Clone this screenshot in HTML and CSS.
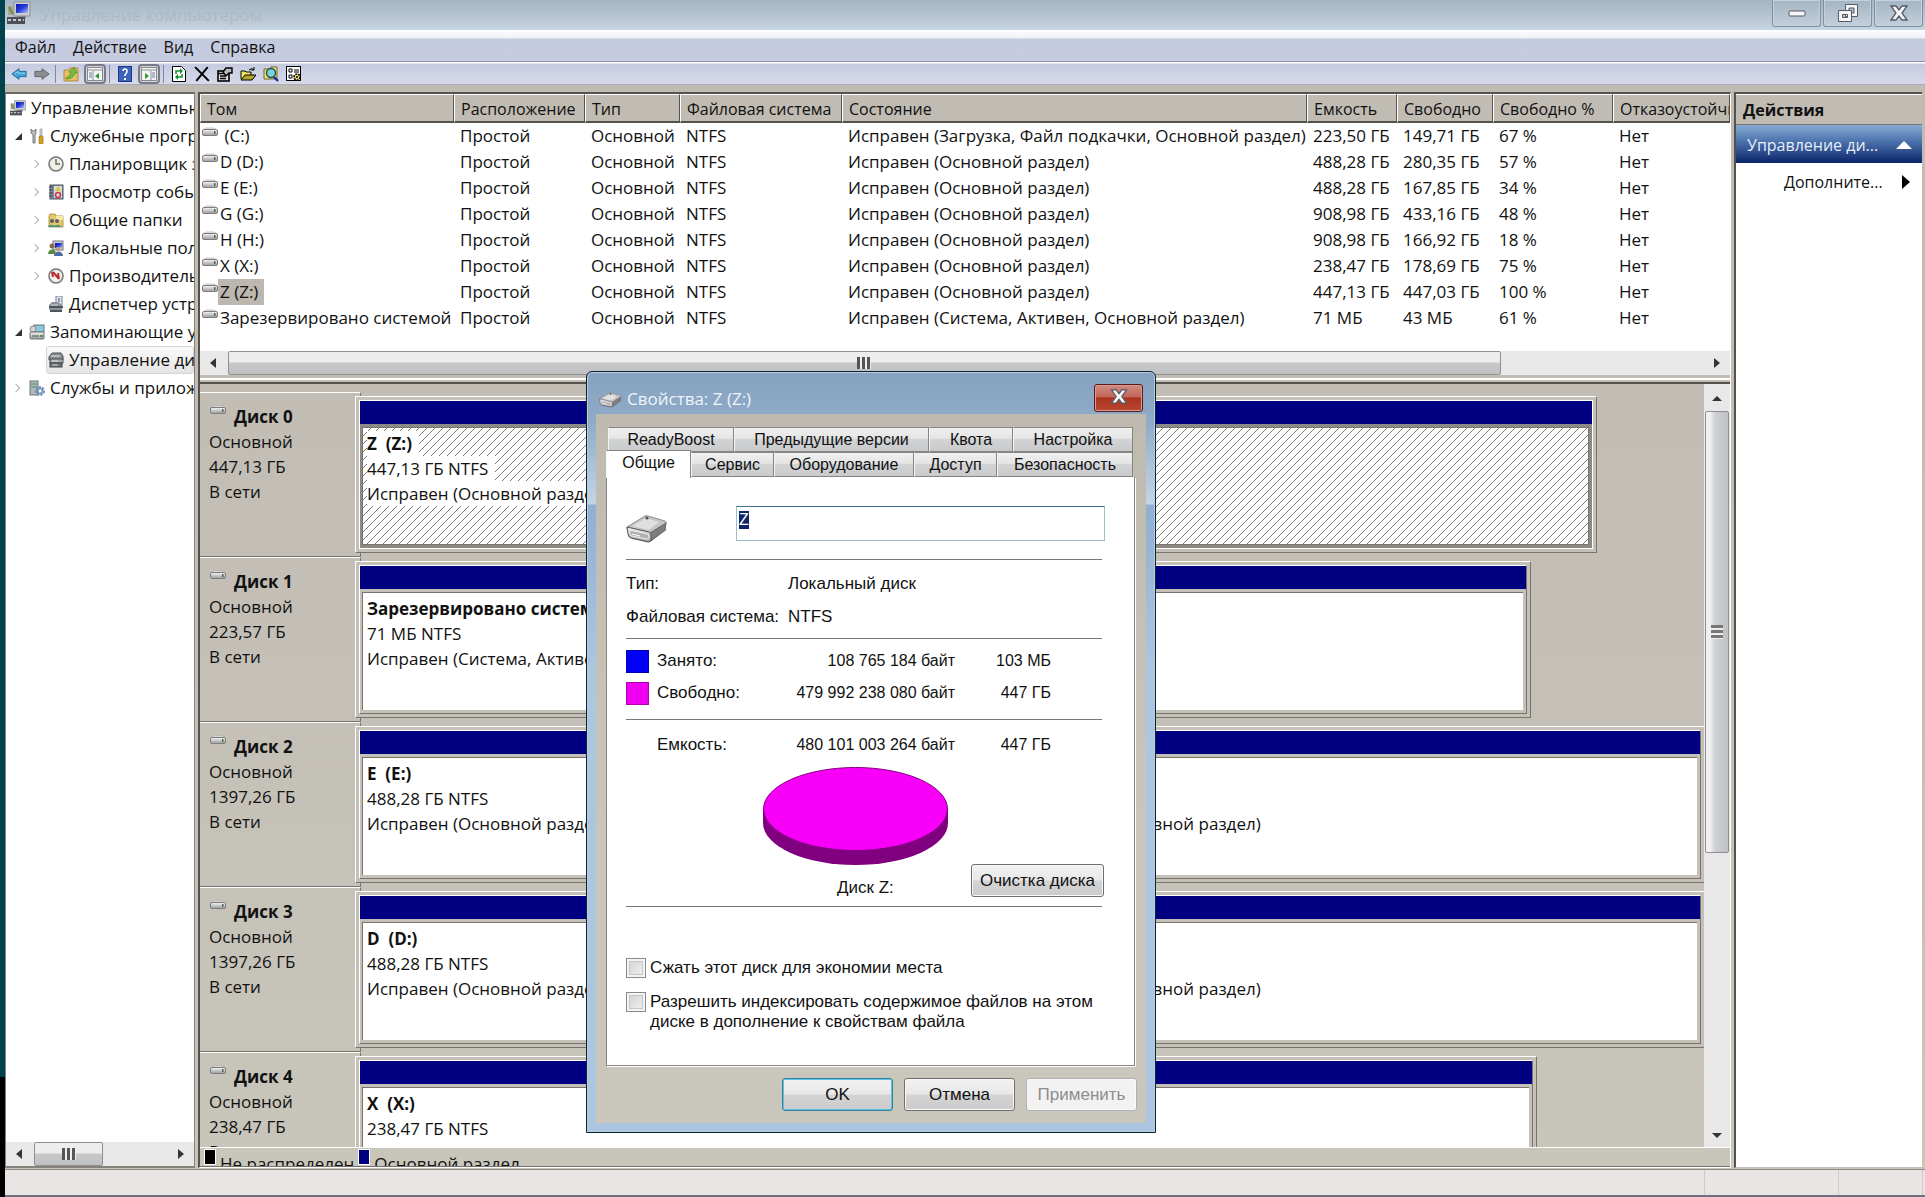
FILE: index.html
```
<!DOCTYPE html>
<html lang="ru">
<head>
    <meta charset="UTF-8">
    <meta name="viewport" content="width=device-width, initial-scale=1.0">
    <title>Управление компьютером</title>
    <link rel="stylesheet" href="styles.css">
</head>
<body>

<!-- Иконки -->
<svg class="sprite" aria-hidden="true">
    <defs>
        <linearGradient id="metal" x1="0" y1="0" x2="0" y2="1">
            <stop offset="0" stop-color="#f6f6f6"/>
            <stop offset="1" stop-color="#9a9a9a"/>
        </linearGradient>
        <linearGradient id="screen" x1="0" y1="0" x2="1" y2="1">
            <stop offset="0" stop-color="#0a12b8"/>
            <stop offset="0.5" stop-color="#2a3ad8"/>
            <stop offset="1" stop-color="#b4c8f4"/>
        </linearGradient>
    </defs>
    <symbol id="i-computer" viewBox="0 0 24 24">
        <rect x="7" y="1" width="16" height="14" fill="#c9ccd2" stroke="#8b8f98"/>
        <rect x="9" y="3" width="12" height="9" fill="url(#screen)"/>
        <path d="M1 5h5v9H1z" fill="#a3a78f"/>
        <path d="M2 6l4 7" stroke="#7a8a2c" stroke-width="2"/>
        <path d="M10 15h9v2h-9z" fill="#85888e"/>
        <rect x="0" y="16" width="18" height="7" fill="#4d5157"/>
        <path d="M1 19h16" stroke="#c4c8cc" stroke-width="2" stroke-dasharray="3 2"/>
    </symbol>
    <symbol id="i-tools" viewBox="0 0 16 16">
        <path d="M4 15V7L2 5V1l2 2h1l2-2v4L6 7v8z" fill="#b9bdc2" stroke="#777b80"/>
        <path d="M11 1h2v7h-2z" fill="#d8d8d8" stroke="#88878a" stroke-width=".6"/>
        <rect x="10" y="8" width="4" height="8" rx="1" fill="#d9a21c" stroke="#91680a" stroke-width=".6"/>
    </symbol>
    <symbol id="i-clock" viewBox="0 0 16 16">
        <circle cx="8" cy="8" r="7" fill="#f2efdf" stroke="#77787a" stroke-width="1.6"/>
        <path d="M8 3v5h4" fill="none" stroke="#5c6b7a" stroke-width="1.4"/>
    </symbol>
    <symbol id="i-events" viewBox="0 0 16 16">
        <rect x="2" y="1" width="13" height="14" fill="#7d8a98" stroke="#4f565e"/>
        <path d="M6 2h8v12H6z" fill="#d9dde2"/>
        <path d="M1 3h4M1 6h4M1 9h4M1 12h4" stroke="#444"/>
        <path d="M10 2l3 5H7z" fill="#e0c62c"/>
        <circle cx="10" cy="11" r="2.500" fill="none" stroke="#cc3554" stroke-width="1.600"/>
    </symbol>
    <symbol id="i-folders" viewBox="0 0 16 16">
        <path d="M1 4l1-2h5l1 2h7v11H1z" fill="#e6c866" stroke="#a4852c" stroke-width=".8"/>
        <path d="M8 4h7v4H8z" fill="#f5e8ad"/>
        <circle cx="4" cy="9" r="2" fill="#54616a"/>
        <circle cx="9" cy="9" r="2" fill="#54616a"/>
        <path d="M0 15c0-3 7-3 7 0zM6 15c0-3 7-3 7 0z" fill="#51947d"/>
    </symbol>
    <symbol id="i-users" viewBox="0 0 16 16">
        <rect x="5" y="1" width="10" height="9" fill="#c9ccd2" stroke="#777b85"/>
        <rect x="7" y="3" width="7" height="5" fill="url(#screen)"/>
        <circle cx="4" cy="6" r="2.5" fill="#8a6a42"/>
        <path d="M0 14c0-6 8-6 8 0z" fill="#5a8a3c"/>
        <circle cx="10" cy="9" r="2.2" fill="#c29f76"/>
        <path d="M6 16c0-6 9-6 9 0z" fill="#4c6da4"/>
    </symbol>
    <symbol id="i-perf" viewBox="0 0 16 16">
        <circle cx="8" cy="8" r="7" fill="#f3f0f0" stroke="#75777b" stroke-width="1.6"/>
        <path d="M4 4l1 5M5 4l6 7M10 5l1 6" fill="none" stroke="#c02b2b" stroke-width="2"/>
    </symbol>
    <symbol id="i-devices" viewBox="0 0 16 16">
        <rect x="8" y="0" width="6" height="9" fill="#e3e6ea" stroke="#77808a"/>
        <rect x="10" y="2" width="2" height="4" fill="#7d9bb5"/>
        <path d="M1 9l3-3h6l4 3v5H1z" fill="#8b939b"/>
        <path d="M1 11h14M2 15h12" stroke="#4f555b" stroke-width="2"/>
        <path d="M3 9h7" stroke="#cfd4d8"/>
    </symbol>
    <symbol id="i-storage" viewBox="0 0 16 16">
        <rect x="5" y="1" width="10" height="7" fill="#8ac9de" stroke="#6e7478"/>
        <circle cx="4" cy="5" r="3" fill="#d5d5d5" stroke="#85888b"/>
        <rect x="1" y="8" width="14" height="7" rx="1" fill="url(#metal)" stroke="#6f7173"/>
        <path d="M3 12h7" stroke="#55585a"/>
        <rect x="11" y="11" width="3" height="2" fill="#3f9c47"/>
    </symbol>
    <symbol id="i-disks" viewBox="0 0 16 16">
        <path d="M1 5l3-4h9l2 3v4H1z" fill="#888b8e" stroke="#494b4d"/>
        <path d="M3 4h9" stroke="#e3e3e3"/>
        <rect x="2" y="7" width="13" height="4" fill="#a6a8aa" stroke="#515456"/>
        <rect x="2" y="11" width="12" height="4" fill="#6d7073" stroke="#404244"/>
        <path d="M4 9h6M4 13h6" stroke="#dcdcdc"/>
    </symbol>
    <symbol id="i-services" viewBox="0 0 16 16">
        <rect x="1" y="1" width="8" height="14" fill="#aeb8c0" stroke="#6e7780"/>
        <path d="M2 4h6M2 7h6" stroke="#4c8a5a"/>
        <circle cx="11" cy="11" r="3.5" fill="none" stroke="#6c90b4" stroke-width="3" stroke-dasharray="2 1"/>
        <circle cx="11" cy="11" r="2.4" fill="none" stroke="#6c90b4" stroke-width="1.4"/>
    </symbol>
    <symbol id="i-drive" viewBox="0 0 16 9">
        <path d="M1 3l3-2h8l3 2z" fill="#e9e9e9" stroke="#a8a8a8" stroke-width=".6"/>
        <rect x=".5" y="2.500" width="15" height="6" rx="1.5" fill="url(#metal)" stroke="#7d7d7d"/>
        <rect x="12" y="4" width="1.500" height="3" fill="#4f6a50"/>
    </symbol>
    <symbol id="i-drive3d" viewBox="0 0 42 28">
        <path d="M5 24l19 3 17-12-3-3z" fill="#000" opacity=".25"/>
        <path d="M1 12L19 1q1-.6 3 0l17 5q2 1 1 3L25 19q-1 1-3 0L1 14z" fill="#c4c4c4" stroke="#8e8e8e"/>
        <path d="M6 11L20 3l13 4-10 8z" fill="#e0e0e0"/>
        <circle cx="21" cy="3" r="1.6" fill="#555"/>
        <path d="M24 18L40 8l-1 7-14 11z" fill="#7e7e7e" stroke="#666"/>
        <path d="M1 12l22 5q2 1 2 3v5q0 2-3 2L5 23q-3-1-3-4z" fill="url(#metal)" stroke="#555"/>
        <path d="M4 15l17 4q2 1 2 3v1q0 1-2 1L6 21q-2-1-2-3z" fill="#b0b0b6" stroke="#eee"/>
        <path d="M6 19l8 2" stroke="#fff"/>
    </symbol>
    <symbol id="i-back" viewBox="0 0 18 16">
        <path d="M1 8l8-6v3h8v6H9v3z" fill="#3fa3dc" stroke="#23648e"/>
        <path d="M4 8l4-3v2h8" fill="none" stroke="#a0daf5"/>
    </symbol>
    <symbol id="i-forward" viewBox="0 0 18 16">
        <path d="M17 8L9 2v3H1v6h8v3z" fill="#8b8e90" stroke="#5f6264"/>
    </symbol>
    <symbol id="i-up" viewBox="0 0 16 16">
        <path d="M1 4h5l1-2h8v13H1z" fill="#e3bf68" stroke="#a98228" stroke-width=".8"/>
        <path d="M3 12q4-1 5-6H6l5-5 3 6h-2q-2 6-9 6z" fill="#6fc23f" stroke="#3b7a1c" stroke-width=".6"/>
    </symbol>
    <symbol id="i-pane-left" viewBox="0 0 16 16">
        <rect x=".5" y="1.5" width="15" height="13" fill="#f4f4f4" stroke="#8a8a8a"/>
        <path d="M1 4h14M6 5v9" stroke="#8d9099"/>
        <path d="M2 7h3M2 9h3M2 11h3" stroke="#5b80b0"/>
        <path d="M12 7v6L8 10z" fill="#2e9a2e"/>
    </symbol>
    <symbol id="i-pane-right" viewBox="0 0 16 16">
        <rect x=".5" y="1.5" width="15" height="13" fill="#f4f4f4" stroke="#8a8a8a"/>
        <path d="M1 4h14M10 5v9" stroke="#8d9099"/>
        <path d="M11 7h3M11 9h3M11 11h3" stroke="#5b80b0"/>
        <path d="M4 7v6l4-3z" fill="#2e9a2e"/>
    </symbol>
    <symbol id="i-help" viewBox="0 0 14 16">
        <rect x=".5" y=".5" width="13" height="15" fill="#3a63bd" stroke="#21387c"/>
        <path d="M5 5q0-2 2-2t2 2-2 4v1" fill="none" stroke="#fff" stroke-width="1.6"/>
        <path d="M6 12h2v2H6z" fill="#fff"/>
    </symbol>
    <symbol id="i-refresh" viewBox="0 0 14 16">
        <path d="M.5.5h9l4 4v11H.5z" fill="#fff" stroke="#000"/>
        <path d="M4 8V5h5M10 8v3H5" fill="none" stroke="#169128" stroke-width="1.6"/>
        <path d="M8 2l3 3-3 3zM6 8v6l-3-3z" fill="#169128"/>
    </symbol>
    <symbol id="i-delete" viewBox="0 0 14 14">
        <path d="M1 1l12 12M12 1L2 13" stroke="#000" stroke-width="1.8"/>
    </symbol>
    <symbol id="i-props" viewBox="0 0 16 16">
        <rect x="1" y="5" width="11" height="10" fill="#ddd" stroke="#000" stroke-width="1.6"/>
        <path d="M1 7.500h10M3 10h6M3 12.500h6" stroke="#000" stroke-width="1.400"/>
        <path d="M6 6l3-4h6v5h-3l-3 3z" fill="#bbb" stroke="#000" stroke-width="1.4"/>
    </symbol>
    <symbol id="i-open" viewBox="0 0 16 14">
        <path d="M1 12V4h4l1 1h5v3" fill="#f1e66a" stroke="#000"/>
        <path d="M1 13l4-5h11l-4 5z" fill="#b0a72c" stroke="#000"/>
        <path d="M9 3q3-3 5 0m0-3v3h-3" fill="none" stroke="#000"/>
    </symbol>
    <symbol id="i-find" viewBox="0 0 16 16">
        <path d="M1 3h6l1-2h6v12H1z" fill="#efe07a" stroke="#6e682a"/>
        <circle cx="8" cy="7" r="4.5" fill="#79d2d4" stroke="#234f4f" stroke-width="1.4"/>
        <path d="M11 11l4 4" stroke="#1b2ba0" stroke-width="2.4"/>
    </symbol>
    <symbol id="i-settings" viewBox="0 0 16 16">
        <rect x=".5" y=".5" width="14" height="14" fill="#fff" stroke="#000"/>
        <path d="M3 3h3v3H3zM3 9h3v3H3z" fill="none" stroke="#000"/>
        <path d="M8 4h5M8 6h5" stroke="#000"/>
        <circle cx="11" cy="11" r="3" fill="#eee065" stroke="#000" stroke-width="1.6" stroke-dasharray="2 1"/>
        <circle cx="11" cy="11" r="1" fill="#000"/>
    </symbol>
    <symbol id="i-close" viewBox="0 0 18 16">
        <path d="M1 1h5l3 4 3-4h5l-5 7 5 7h-5l-3-4-3 4H1l5-7z" fill="#f6f6f6" stroke="#555b66" stroke-width="1.3"/>
    </symbol>
    <symbol id="i-restore" viewBox="0 0 22 20">
        <path d="M8.500 1.500h12v12h-12z M12 5v5h5V5z" fill="#f6f6f6" stroke="#555b66" fill-rule="evenodd"/>
        <path d="M1.500 7.500h13v11h-13z M5.500 11.500v3h5v-3z" fill="#f6f6f6" stroke="#555b66" fill-rule="evenodd"/>
    </symbol>
    <symbol id="i-min" viewBox="0 0 18 7">
        <rect x="1" y="1" width="16" height="5" rx="1" fill="#f6f6f6" stroke="#555b66"/>
    </symbol>
</svg>

<div class="window">
    <header class="titlebar">
        <svg class="title-icon"><use href="#i-computer"/></svg>
        <h1>Управление компьютером</h1>
        <div class="caption-buttons">
            <button aria-label="Свернуть"><svg width="18" height="7"><use href="#i-min"/></svg></button>
            <button aria-label="Восстановить"><svg width="22" height="20"><use href="#i-restore"/></svg></button>
            <button aria-label="Закрыть"><svg width="18" height="16"><use href="#i-close"/></svg></button>
        </div>
    </header>

    <nav class="menu">
        <button>Файл</button>
        <button>Действие</button>
        <button>Вид</button>
        <button>Справка</button>
    </nav>

    <div class="toolbar">
        <button aria-label="Назад"><svg><use href="#i-back"/></svg></button>
        <button aria-label="Вперед"><svg><use href="#i-forward"/></svg></button>
        <span class="sep"></span>
        <button aria-label="Вверх"><svg><use href="#i-up"/></svg></button>
        <button class="pressed" aria-label="Дерево консоли"><svg><use href="#i-pane-left"/></svg></button>
        <span class="sep"></span>
        <button aria-label="Справка"><svg><use href="#i-help"/></svg></button>
        <button class="pressed" aria-label="Панель действий"><svg><use href="#i-pane-right"/></svg></button>
        <span class="sep"></span>
        <button aria-label="Обновить"><svg><use href="#i-refresh"/></svg></button>
        <button aria-label="Удалить"><svg><use href="#i-delete"/></svg></button>
        <button aria-label="Свойства"><svg><use href="#i-props"/></svg></button>
        <button aria-label="Открыть"><svg><use href="#i-open"/></svg></button>
        <button aria-label="Найти"><svg><use href="#i-find"/></svg></button>
        <button aria-label="Параметры"><svg><use href="#i-settings"/></svg></button>
    </div>

    <main class="workspace">
        <aside class="tree">
            <ul>
                <li class="root"><svg><use href="#i-computer"/></svg>Управление компьютером</li>
                <li><i class="open"></i><svg><use href="#i-tools"/></svg>Служебные программы</li>
                <li class="sub"><i></i><svg><use href="#i-clock"/></svg>Планировщик заданий</li>
                <li class="sub"><i></i><svg><use href="#i-events"/></svg>Просмотр событий</li>
                <li class="sub"><i></i><svg><use href="#i-folders"/></svg>Общие папки</li>
                <li class="sub"><i></i><svg><use href="#i-users"/></svg>Локальные пользователи</li>
                <li class="sub"><i></i><svg><use href="#i-perf"/></svg>Производительность</li>
                <li class="sub leaf"><svg><use href="#i-devices"/></svg>Диспетчер устройств</li>
                <li><i class="open"></i><svg><use href="#i-storage"/></svg>Запоминающие устройства</li>
                <li class="sub leaf selected"><svg><use href="#i-disks"/></svg>Управление дисками</li>
                <li><i></i><svg><use href="#i-services"/></svg>Службы и приложения</li>
            </ul>
            <div class="hscroll">
                <span class="arrow left"></span>
                <span class="thumb"><span class="grip"></span></span>
                <span class="arrow right"></span>
            </div>
        </aside>

        <section class="content">
            <div class="volumes">
                <table>
                    <colgroup>
                        <col class="c-name"><col class="c-layout"><col class="c-type"><col class="c-fs"><col class="c-state"><col class="c-size"><col class="c-free"><col class="c-pct"><col>
                    </colgroup>
                    <thead>
                        <tr><th>Том</th><th>Расположение</th><th>Тип</th><th>Файловая система</th><th>Состояние</th><th>Емкость</th><th>Свободно</th><th>Свободно %</th><th>Отказоустойчивость</th></tr>
                    </thead>
                    <tbody>
                        <tr><td><svg><use href="#i-drive"/></svg><span>&nbsp;(C:)</span></td><td>Простой</td><td>Основной</td><td>NTFS</td><td>Исправен (Загрузка, Файл подкачки, Основной раздел)</td><td>223,50 ГБ</td><td>149,71 ГБ</td><td>67 %</td><td>Нет</td></tr>
                        <tr><td><svg><use href="#i-drive"/></svg><span>D (D:)</span></td><td>Простой</td><td>Основной</td><td>NTFS</td><td>Исправен (Основной раздел)</td><td>488,28 ГБ</td><td>280,35 ГБ</td><td>57 %</td><td>Нет</td></tr>
                        <tr><td><svg><use href="#i-drive"/></svg><span>E (E:)</span></td><td>Простой</td><td>Основной</td><td>NTFS</td><td>Исправен (Основной раздел)</td><td>488,28 ГБ</td><td>167,85 ГБ</td><td>34 %</td><td>Нет</td></tr>
                        <tr><td><svg><use href="#i-drive"/></svg><span>G (G:)</span></td><td>Простой</td><td>Основной</td><td>NTFS</td><td>Исправен (Основной раздел)</td><td>908,98 ГБ</td><td>433,16 ГБ</td><td>48 %</td><td>Нет</td></tr>
                        <tr><td><svg><use href="#i-drive"/></svg><span>H (H:)</span></td><td>Простой</td><td>Основной</td><td>NTFS</td><td>Исправен (Основной раздел)</td><td>908,98 ГБ</td><td>166,92 ГБ</td><td>18 %</td><td>Нет</td></tr>
                        <tr><td><svg><use href="#i-drive"/></svg><span>X (X:)</span></td><td>Простой</td><td>Основной</td><td>NTFS</td><td>Исправен (Основной раздел)</td><td>238,47 ГБ</td><td>178,69 ГБ</td><td>75 %</td><td>Нет</td></tr>
                        <tr><td><svg><use href="#i-drive"/></svg><span class="current">Z (Z:)</span></td><td>Простой</td><td>Основной</td><td>NTFS</td><td>Исправен (Основной раздел)</td><td>447,13 ГБ</td><td>447,03 ГБ</td><td>100 %</td><td>Нет</td></tr>
                        <tr><td><svg><use href="#i-drive"/></svg><span>Зарезервировано системой</span></td><td>Простой</td><td>Основной</td><td>NTFS</td><td>Исправен (Система, Активен, Основной раздел)</td><td>71 МБ</td><td>43 МБ</td><td>61 %</td><td>Нет</td></tr>
                    </tbody>
                </table>
                <div class="hscroll">
                    <span class="arrow left"></span>
                    <span class="track"><span class="thumb"><span class="grip"></span></span></span>
                    <span class="arrow right"></span>
                </div>
            </div>

            <div class="splitter"></div>

            <div class="disks">
                <div class="disk-list">
                    <div class="disk">
                        <div class="disk-label">
                            <h2><svg><use href="#i-drive"/></svg>Диск 0</h2>
                            <p>Основной</p><p>447,13 ГБ</p><p>В сети</p>
                        </div>
                        <div class="disk-area">
                            <div class="bar" style="width: 92.1%">
                                <div class="volume selected">
                                    <div class="volume-body">
                                        <svg class="hatch">
                                            <defs>
                                                <pattern id="hatch" width="8" height="8" patternUnits="userSpaceOnUse">
                                                    <path d="M-1 9L9-1M-1 1l2-2M7 9l2-2" stroke="#777" stroke-width="1"/>
                                                </pattern>
                                            </defs>
                                            <rect width="100%" height="100%" fill="url(#hatch)"/>
                                        </svg>
                                        <p><b>Z&nbsp; (Z:)</b></p><p>447,13 ГБ NTFS</p><p>Исправен (Основной раздел)</p>
                                    </div>
                                </div>
                            </div>
                        </div>
                    </div>
                    <div class="disk">
                        <div class="disk-label">
                            <h2><svg><use href="#i-drive"/></svg>Диск 1</h2>
                            <p>Основной</p><p>223,57 ГБ</p><p>В сети</p>
                        </div>
                        <div class="disk-area">
                            <div class="bar" style="width: 87.2%">
                                <div class="volume" style="flex: 1">
                                    <div class="volume-body"><p><b>Зарезервировано системой</b></p><p>71 МБ NTFS</p><p>Исправен (Система, Активен, Основной раздел)</p></div>
                                </div>
                                <div class="volume" style="flex: 3">
                                    <div class="volume-body"></div>
                                </div>
                            </div>
                        </div>
                    </div>
                    <div class="disk">
                        <div class="disk-label">
                            <h2><svg><use href="#i-drive"/></svg>Диск 2</h2>
                            <p>Основной</p><p>1397,26 ГБ</p><p>В сети</p>
                        </div>
                        <div class="disk-area">
                            <div class="bar" style="width: 100.1%">
                                <div class="volume" style="flex: 97">
                                    <div class="volume-body"><p><b>E&nbsp; (E:)</b></p><p>488,28 ГБ NTFS</p><p>Исправен (Основной раздел)</p></div>
                                </div>
                                <div class="volume" style="flex: 103">
                                    <div class="volume-body"><p><b>G&nbsp; (G:)</b></p><p>908,98 ГБ NTFS</p><p>Исправен (Основной раздел)</p></div>
                                </div>
                            </div>
                        </div>
                    </div>
                    <div class="disk">
                        <div class="disk-label">
                            <h2><svg><use href="#i-drive"/></svg>Диск 3</h2>
                            <p>Основной</p><p>1397,26 ГБ</p><p>В сети</p>
                        </div>
                        <div class="disk-area">
                            <div class="bar" style="width: 100.1%">
                                <div class="volume" style="flex: 97">
                                    <div class="volume-body"><p><b>D&nbsp; (D:)</b></p><p>488,28 ГБ NTFS</p><p>Исправен (Основной раздел)</p></div>
                                </div>
                                <div class="volume" style="flex: 103">
                                    <div class="volume-body"><p><b>H&nbsp; (H:)</b></p><p>908,98 ГБ NTFS</p><p>Исправен (Основной раздел)</p></div>
                                </div>
                            </div>
                        </div>
                    </div>
                    <div class="disk">
                        <div class="disk-label">
                            <h2><svg><use href="#i-drive"/></svg>Диск 4</h2>
                            <p>Основной</p><p>238,47 ГБ</p><p>В сети</p>
                        </div>
                        <div class="disk-area">
                            <div class="bar" style="width: 87.6%">
                                <div class="volume">
                                    <div class="volume-body"><p><b>X&nbsp; (X:)</b></p><p>238,47 ГБ NTFS</p><p>Исправен (Основной раздел)</p></div>
                                </div>
                            </div>
                        </div>
                    </div>
                </div>
                <div class="vscroll">
                    <span class="arrow up"></span>
                    <span class="track"><span class="thumb"><span class="grip"></span></span></span>
                    <span class="arrow down"></span>
                </div>
            </div>

            <div class="legend">
                <span class="swatch black"></span><span class="legend-text">Не распределен</span>
                <span class="swatch navy"></span><span class="legend-text">Основной раздел</span>
            </div>
        </section>

        <aside class="actions">
            <h2>Действия</h2>
            <button class="actions-group"><span>Управление ди...</span><i class="tri-up"></i></button>
            <button class="actions-item"><span>Дополните...</span><i class="tri-right"></i></button>
        </aside>
    </main>

    <footer class="status"><span></span><span></span><span></span></footer>
</div>

<!-- Окно свойств диска -->
<div class="dialog" role="dialog" aria-labelledby="dialog-title">
    <div class="dialog-title">
        <svg><use href="#i-drive3d"/></svg>
        <h2 id="dialog-title">Свойства: Z (Z:)</h2>
        <button class="dialog-close" aria-label="Закрыть"><svg><use href="#i-close"/></svg></button>
    </div>
    <div class="dialog-body">
        <div class="tabs back">
            <button class="t1">ReadyBoost</button><button class="t2">Предыдущие версии</button><button class="t3">Квота</button><button class="t4">Настройка</button>
        </div>
        <div class="tabs">
            <button class="active">Общие</button><button class="t5">Сервис</button><button class="t6">Оборудование</button><button class="t7">Доступ</button><button class="t8">Безопасность</button>
        </div>
        <form class="panel">
            <div class="name-row">
                <svg><use href="#i-drive3d"/></svg>
                <input type="text" id="label" aria-label="Метка тома" value="Z">
            </div>
            <dl class="info">
                <div><dt>Тип:</dt><dd>Локальный диск</dd></div>
                <div><dt>Файловая система:</dt><dd>NTFS</dd></div>
            </dl>
            <dl class="usage">
                <div><dt><i class="used"></i>Занято:</dt><dd class="bytes">108 765 184 байт</dd><dd class="short">103 МБ</dd></div>
                <div><dt><i class="free"></i>Свободно:</dt><dd class="bytes">479 992 238 080 байт</dd><dd class="short">447 ГБ</dd></div>
            </dl>
            <dl class="usage total">
                <div><dt><i></i>Емкость:</dt><dd class="bytes">480 101 003 264 байт</dd><dd class="short">447 ГБ</dd></div>
            </dl>
            <div class="chart">
                <figure>
                    <svg viewBox="0 0 185 98" width="185" height="98">
                        <path d="M0 42v14a92.500 42 0 0 0 185 0V42z" fill="#800080"/>
                        <ellipse cx="92.500" cy="42" rx="92" ry="41.500" fill="#f800f8" stroke="#800080"/>
                    </svg>
                    <figcaption>Диск Z:</figcaption>
                </figure>
                <button type="button" class="btn">Очистка диска</button>
            </div>
            <div class="checks">
                <label><input type="checkbox">Сжать этот диск для экономии места</label>
                <label><input type="checkbox"><span>Разрешить индексировать содержимое файлов на этом<br>диске в дополнение к свойствам файла</span></label>
            </div>
        </form>
        <div class="dialog-buttons">
            <button class="btn default">OK</button>
            <button class="btn">Отмена</button>
            <button class="btn" disabled>Применить</button>
        </div>
    </div>
</div>

<script>
    // Выделить метку тома при открытии окна
    const label = document.getElementById('label');
    label.focus();
    label.select();
</script>

</body>
</html>
```
FILE: styles.css
```
* {
    margin: 0;
    padding: 0;
    box-sizing: border-box;
}

body {
    font-family: "Open Sans", "Noto Sans", sans-serif;
    font-size: 17px;
    line-height: 26px;
    color: #111;
    background: linear-gradient(#00434d 90%, #000 90%);
    padding-left: 5px;
    overflow: hidden;
}

button {
    font: inherit;
    color: inherit;
    border: none;
    background: none;
}

ul {
    list-style: none;
}

.sprite {
    position: absolute;
    width: 0;
    height: 0;
}

.window {
    display: flex;
    flex-direction: column;
    height: 100vh;
    background-color: #c2beb5;
    border-bottom: 2px solid #6d7080;
}

/* Заголовок */
.titlebar {
    display: flex;
    align-items: flex-start;
    height: 30px;
    padding-left: 2px;
    background: linear-gradient(#a3b5c3, #bccad6 70%, #c6d5e4);
}

.title-icon {
    width: 24px;
    height: 24px;
    margin-top: 1px;
}

.titlebar h1 {
    flex: 1;
    margin: 2px 0 0 9px;
    font-size: 17px;
    font-weight: normal;
    color: #aebac4;
}

.caption-buttons {
    display: flex;
    gap: 2px;
    padding-right: 2px;
}

.caption-buttons button {
    display: flex;
    align-items: center;
    justify-content: center;
    width: 49px;
    height: 27px;
    border: 1px solid #7d91a3;
    border-top: none;
    border-radius: 0 0 3px 3px;
    box-shadow: inset 0 0 0 1px #c5d2de;
}

/* Меню и панель инструментов */
.menu {
    display: flex;
    gap: 17px;
    height: 32px;
    padding: 3px 10px 0;
    font-size: 16px;
    background: linear-gradient(#fff, #eef0f8 8px, #c3cadf 9px, #c8cce0);
    border-bottom: 1px solid #9295a8;
}

.toolbar {
    display: flex;
    align-items: center;
    gap: 3px;
    height: 23px;
    padding: 1px 0 0 4px;
    background: linear-gradient(#fff 1px, #c6cbe0 2px, #d6daea);
    border-bottom: 1px solid #a9abb5;
}

.toolbar button {
    display: flex;
    align-items: center;
    justify-content: center;
    width: 20px;
    height: 20px;
}

.toolbar svg {
    flex: none;
    width: 16px;
    height: 16px;
}

.toolbar .pressed {
    width: 22px;
    border: 2px solid #777a88;
    border-radius: 4px;
    background-color: #d5d7df;
}

.toolbar .sep {
    width: 1px;
    height: 18px;
    margin-right: 2px;
    background-color: #84879a;
}

/* Рабочая область */
.workspace {
    display: grid;
    grid-template-columns: 190px minmax(0, 1fr) 188px;
    grid-template-rows: minmax(0, 1fr);
    gap: 3px;
    flex: 1;
    min-height: 0;
    padding: 7px 3px 1px 0;
    background: linear-gradient(#bfbab2, #c8c5bb);
}

.tree {
    display: flex;
    flex-direction: column;
    justify-content: space-between;
    overflow: hidden;
    background-color: #fff;
    border: 1px solid #85827c;
    border-top: 2px solid #6c6963;
    border-bottom-width: 2px;
}

.tree li {
    display: flex;
    align-items: center;
    height: 28px;
    padding-left: 9px;
    white-space: nowrap;
}

.tree li.root {
    padding-left: 4px;
}

.tree li.sub {
    padding-left: 28px;
}

.tree li.leaf {
    margin-left: 40px;
    padding-left: 2px;
}

.tree li.selected {
    border: 1px solid #d5d5d5;
    border-radius: 3px;
    padding-left: 1px;
    background: linear-gradient(#fafafa, #e4e4e4);
}

.tree li svg {
    flex: none;
    width: 16px;
    height: 16px;
    margin-right: 5px;
}

.tree li i {
    flex: none;
    width: 6px;
    height: 6px;
    margin: 0 10px 0 -2px;
    border: 1px solid #b0b0b0;
    border-width: 1px 1px 0 0;
    transform: rotate(45deg);
}

.tree li i.open {
    width: 0;
    height: 0;
    margin: 0 7px 0 0;
    border: solid transparent;
    border-width: 0 0 7px 7px;
    border-bottom-color: #333;
    transform: none;
}

/* Полосы прокрутки */
.hscroll,
.vscroll {
    display: flex;
    align-items: center;
    background-color: #e8e8e8;
}

.hscroll {
    height: 24px;
}

.hscroll .track {
    flex: 1;
    height: 24px;
}

.vscroll {
    flex-direction: column;
    width: 26px;
}

.vscroll .track {
    flex: 1;
    width: 24px;
}

.thumb {
    display: flex;
    align-items: center;
    justify-content: center;
    border: 1px solid #909090;
    border-radius: 2px;
}

.hscroll .thumb {
    height: 24px;
    background: linear-gradient(#ededed 45%, #c6c8ca 50%, #bfc1c3);
}

.tree .thumb {
    width: 69px;
    margin: 0 auto 0 0;
}

.volumes .thumb {
    width: 86.4%;
}

.vscroll .thumb {
    height: 62%;
    background: linear-gradient(90deg, #f0f0f0 20%, #cfd0d3 40%, #c0c1c5);
}

.hscroll .grip {
    width: 14px;
    height: 12px;
    background: repeating-linear-gradient(90deg, #555 0 3px, #eee 3px 5px);
}

.vscroll .grip {
    width: 12px;
    height: 14px;
    background: repeating-linear-gradient(#777 0 3px, #eee 3px 5px);
}

.arrow {
    flex: none;
    border: solid transparent;
}

.arrow.left {
    margin: 0 12px 0 10px;
    border-width: 5px 6px 5px 0;
    border-right-color: #333;
}

.arrow.right {
    margin: 0 10px 0 13px;
    border-width: 5px 0 5px 6px;
    border-left-color: #333;
}

.arrow.up {
    margin: 12px 0 10px;
    border-width: 0 5px 5px;
    border-bottom-color: #333;
}

.arrow.down {
    margin: 9px 0 9px;
    border-width: 5px 5px 0;
    border-top-color: #333;
}

/* Список томов */
.content {
    display: flex;
    flex-direction: column;
    min-width: 0;
    overflow: hidden;
    border: 1px solid #fff;
    border-top: 2px solid #55524d;
    border-left: 2px solid #55524d;
}

.volumes {
    display: flex;
    flex-direction: column;
    justify-content: space-between;
    flex: none;
    height: 281px;
    background-color: #fff;
}

.volumes table {
    width: 100%;
    table-layout: fixed;
    border-collapse: separate;
    border-spacing: 0;
}

.c-name { width: 254px; }
.c-layout { width: 131px; }
.c-type { width: 95px; }
.c-fs { width: 162px; }
.c-state { width: 465px; }
.c-size { width: 90px; }
.c-free { width: 96px; }
.c-pct { width: 120px; }

.volumes th,
.volumes td {
    padding-left: 6px;
    text-align: left;
    font-weight: normal;
    white-space: nowrap;
    overflow: hidden;
}

.volumes th {
    height: 29px;
    padding-top: 1px;
    background-color: #c0bbb3;
    border: 1px solid #fff;
    border-right-color: #55524d;
    border-bottom: 2px solid #55524d;
    font-size: 16px;
    line-height: 24px;
}

.volumes td {
    height: 26px;
}

.volumes td:first-child {
    padding-left: 2px;
}

.volumes td svg {
    width: 16px;
    height: 9px;
    vertical-align: 6px;
}

.volumes td span {
    display: inline-block;
    height: 26px;
    padding: 0 6px 0 2px;
    vertical-align: top;
}

.volumes .current {
    background-color: #bcb7af;
}

.splitter {
    flex: none;
    height: 9px;
    background: linear-gradient(#c2beb5 3px, #fff 3px 5px, #c2beb5 5px 7px, #55524d 7px);
}

/* Диски */
.disks {
    display: flex;
    flex: 1;
    min-height: 0;
}

.disk-list {
    flex: 1;
    min-width: 0;
    padding-top: 8px;
    overflow: hidden;
    line-height: 25px;
}

.disk {
    display: flex;
    height: 165px;
}

.disk-label {
    flex: none;
    width: 161px;
    padding: 11px 0 0 9px;
    border: 1px solid #77746e;
    border-top-color: #fff;
    border-left: none;
}

.disk-label h2 {
    display: flex;
    font-size: 17px;
}

.disk-label svg {
    width: 16px;
    height: 9px;
    margin: 1px 8px 0 1px;
}

.disk-area {
    position: relative;
    flex: 1;
    min-width: 0;
    margin-left: -6px;
    padding-top: 4px;
    overflow: hidden;
}

.bar {
    display: flex;
    gap: 2px;
    height: 157px;
    padding: 3px;
    background-color: #c5c1b8;
    border: 1px solid #fff;
    border-right-color: #77746e;
    border-bottom-color: #77746e;
}

.volume {
    display: flex;
    flex-direction: column;
    flex: 1;
    min-width: 0;
    padding: 0 3px 3px 2px;
    border: 1px solid #fff;
    border-right-color: #77746e;
    border-bottom-color: #77746e;
    background-color: #c5c1b8;
}

.volume::before {
    content: "";
    height: 23px;
    margin: 0 -3px 3px -2px;
    background-color: #000080;
}

.volume-body {
    position: relative;
    flex: 1;
    padding: 3px 0 0 4px;
    overflow: hidden;
    white-space: nowrap;
    background-color: #fff;
    border: 1px solid #77746e;
    border-width: 1px 0 0 1px;
}

.volume.selected {
    background-color: #8c8a86;
    border-right-color: #fff;
    border-bottom-color: #fff;
}

.volume.selected .volume-body {
    border-width: 1px;
}

.volume.selected p {
    position: relative;
    width: max-content;
    padding-right: 7px;
    background-color: #fff;
}

.hatch {
    position: absolute;
    top: 0;
    left: 0;
    width: 100%;
    height: 100%;
}

.legend {
    display: flex;
    flex: none;
    height: 20px;
    padding-left: 4px;
    overflow: hidden;
    border-top: 1px solid #fff;
    border-bottom: 1px solid #77746e;
}

.swatch {
    width: 12px;
    height: 16px;
    margin: 1px 4px 0 0;
    border: 1px solid #fff;
}

.swatch.black { background-color: #000; }
.swatch.navy { background-color: #000080; }

.legend-text {
    margin: 3px 4px 0 0;
}

/* Действия */
.actions {
    font-size: 16px;
    background-color: #fff;
    border: 2px solid #55524d;
    border-right: none;
    border-bottom: 1px solid #c2beb5;
}

.actions h2 {
    height: 31px;
    padding: 3px 0 0 7px;
    font-size: 16px;
    line-height: 24px;
    background-color: #c0bbb3;
    border-top: 1px solid #fff;
    border-bottom: 1px solid #77746e;
}

.actions button {
    display: flex;
    align-items: center;
    justify-content: space-between;
    width: 100%;
}

.actions-group {
    height: 38px;
    padding: 2px 10px 0 11px;
    background: linear-gradient(#86abd4, #5077b0 40%, #0b246a);
}

.actions .actions-group {
    color: #e6eefa;
}

.actions-item {
    height: 36px;
    padding: 1px 12px 0 48px;
}

.tri-up {
    border: solid transparent;
    border-width: 0 8px 8px;
    border-bottom-color: #fff;
}

.tri-right {
    border: solid transparent;
    border-width: 7px 0 7px 8px;
    border-left-color: #000;
}

/* Строка состояния */
.status {
    display: flex;
    justify-content: flex-end;
    flex: none;
    height: 26px;
    border-top: 1px solid #8b8984;
    background-color: #e8e5e4;
}

.status span {
    width: 84px;
    border-left: 1px solid #cfccc8;
}

.status span:first-child {
    width: 134px;
}

.status span:last-child {
    width: 3px;
}

/* Окно свойств */
.dialog {
    position: absolute;
    top: 371px;
    left: 586px;
    display: flex;
    flex-direction: column;
    width: 570px;
    height: 762px;
    padding: 0 9px 9px;
    font-family: "Liberation Sans", Arial, sans-serif;
    font-size: 17px;
    line-height: 20px;
    background: linear-gradient(#86a2bf, #8fabc8 50px, #c4d6e6 132px, #8fb0cf 133px, #acc6e2 300px);
    border: 1px solid #10202c;
    border-radius: 6px 6px 0 0;
    box-shadow: inset 0 0 0 1px #b5cfe5;
}

.dialog-title {
    display: flex;
    align-items: flex-start;
    height: 42px;
    padding: 0 3px;
}

.dialog-title svg {
    width: 23px;
    height: 16px;
    margin-top: 20px;
}

.dialog-title h2 {
    flex: 1;
    margin: 17px 0 0 5px;
    font-family: "Open Sans", "Noto Sans", sans-serif;
    font-size: 17px;
    font-weight: normal;
    color: #eef5fb;
}

.dialog-close {
    width: 49px;
    height: 28px;
    margin-top: 12px;
    border: 1px solid #5a1a1c;
    border-radius: 3px;
    box-shadow: inset 0 0 0 1px #dc9a90;
    background: linear-gradient(#d08a80, #c4675a 45%, #ac3220 50%, #b84830);
}

.dialog-title .dialog-close svg {
    width: 18px;
    height: 15px;
    margin: 2px 0 0;
}

.dialog-body {
    display: flex;
    flex-direction: column;
    flex: 1;
    padding: 13px 11px 12px 10px;
    background: linear-gradient(#bfbab0, #c9c6bb 60%);
}

.tabs {
    display: flex;
    height: 25px;
    padding-right: 2px;
    font-size: 16px;
}

.tabs.back {
    padding-left: 2px;
}

.tabs button {
    height: 25px;
    border: 1px solid #87857f;
    border-left-color: #f5f5f5;
    background: linear-gradient(#f0f0f0, #e4e4e4 45%, #d2d3d4 50%, #c9cacb);
}

.tabs .active {
    position: relative;
    width: 85px;
    height: 28px;
    margin-top: -2px;
    padding-bottom: 4px;
    background: #fff;
    border-bottom: none;
}

.tabs .t1 { width: 126px; }
.tabs .t2 { width: 195px; }
.tabs .t3 { width: 84px; }
.tabs .t4 { flex: 1; }
.tabs .t5 { width: 83px; }
.tabs .t6 { width: 140px; }
.tabs .t7 { width: 83px; }
.tabs .t8 { flex: 1; }

.panel {
    flex: 1;
    padding: 29px 32px 0 19px;
    background-color: #fff;
    border: 1px solid #87857f;
    border-top: none;
    box-shadow: 1px 1px 0 #fff;
}

.name-row {
    display: flex;
    justify-content: space-between;
    margin: 0 -3px 16px 0;
}

.name-row svg {
    width: 42px;
    height: 28px;
    margin-top: 9px;
}

.name-row input {
    width: 369px;
    height: 35px;
    padding: 2px 2px 10px;
    font: inherit;
    font-size: 16px;
    border: 1px solid #9cc0c8;
    border-top-color: #3a7290;
    outline: none;
}

.name-row input::selection {
    color: #fff;
    background-color: #0b246a;
}

.info,
.usage,
.checks {
    border-top: 1px solid #77777a;
}

.info > div,
.usage > div {
    display: flex;
    align-items: center;
    height: 33px;
}

.info {
    padding: 7px 0 5px;
}

.info dt {
    width: 162px;
}

.usage {
    padding: 6px 0 10px;
}

.usage > div {
    height: 32px;
}

.usage.total {
    padding: 9px 0 6px;
}

.usage dt {
    display: flex;
    align-items: center;
    gap: 8px;
    width: 133px;
}

.usage dd {
    font-size: 16px;
}

.usage i {
    width: 23px;
    height: 23px;
}

.usage .used { background-color: #0000fa; border: 1px solid #0000b0; }
.usage .free { background-color: #f000f0; border: 1px solid #b000b0; }

.usage .bytes {
    width: 196px;
    text-align: right;
}

.usage .short {
    width: 96px;
    text-align: right;
}

.chart {
    display: flex;
    align-items: flex-end;
    justify-content: space-between;
    margin: 0 -2px 9px 137px;
}

.chart svg {
    display: block;
    margin-bottom: 14px;
}

.chart figcaption {
    padding-left: 74px;
    line-height: 18px;
}

.chart .btn {
    width: 133px;
}

.checks {
    padding-top: 51px;
}

.checks label {
    display: flex;
    gap: 4px;
    margin-bottom: 14px;
}

.checks input {
    flex: none;
    appearance: none;
    width: 20px;
    height: 20px;
    border: 1px solid #87898c;
    background: linear-gradient(135deg, #cfcfd2, #f4f4f4);
    box-shadow: inset 0 0 0 2px #f4f4f4, inset 0 0 0 3px #c4c6ca;
}

.btn {
    width: 111px;
    height: 33px;
    border: 1px solid #6e6e6e;
    border-radius: 3px;
    background: linear-gradient(#f2f2f2, #e8e8e8 48%, #d4d4d5 52%, #cbcbcc);
    box-shadow: inset 0 0 0 1px #f8f8f8;
}

.btn.default {
    border-color: #3a7fa0;
    box-shadow: inset 0 0 0 1px #57c3e0;
}

.btn:disabled {
    color: #8d8d8d;
    border-color: #aeb0b2;
    background: #f2f2f2;
}

.dialog-buttons {
    display: flex;
    justify-content: flex-end;
    gap: 11px;
    margin: 12px -2px 0 0;
}
```
